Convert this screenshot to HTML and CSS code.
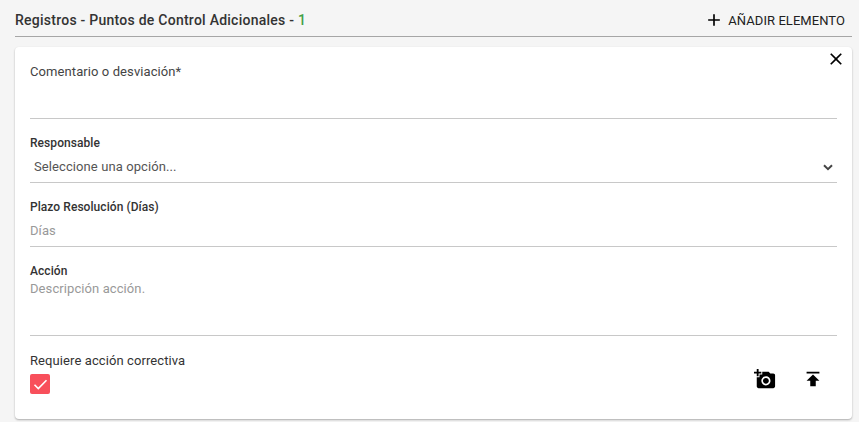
FILE: index.html
```html
<!DOCTYPE html>
<html lang="es">

<head>
  <meta charset="UTF-8" />
  <meta name="viewport" content="width=device-width, initial-scale=1.0" />
  <title>Registros</title>
  <link rel="stylesheet" href="styles.css">
</head>

<body>
  <div class="header">
    <h2 class="title">Registros - Puntos de Control Adicionales - <span class="count">1</span></h2>
    <button class="add-button" type="button">
      <svg class="add-icon" viewBox="0 0 24 24"><path d="M19 13h-6v6h-2v-6H5v-2h6V5h2v6h6v2z" /></svg>
      <span class="add-text">AÑADIR ELEMENTO</span>
    </button>
  </div>

  <form class="card">
    <button class="close-button" type="button" aria-label="Cerrar">
      <svg class="close-icon" viewBox="0 0 24 24"><path d="M19 6.41L17.59 5 12 10.59 6.41 5 5 6.41 10.59 12 5 17.59 6.41 19 12 13.41 17.59 19 19 17.59 13.41 12 19 6.41z" /></svg>
    </button>

    <div class="field field-comment">
      <label class="label-light" for="comentario">Comentario o desviación*</label>
      <textarea class="control" id="comentario"></textarea>
    </div>

    <div class="field field-select">
      <label class="label" for="responsable">Responsable</label>
      <div class="select" id="responsable" tabindex="0">
        <span>Seleccione una opción...</span>
        <svg class="arrow" viewBox="0 0 10 7"><path d="M1 1.2l4 3.9 4-3.9" /></svg>
      </div>
    </div>

    <div class="field field-days">
      <label class="label" for="plazo">Plazo Resolución (Días)</label>
      <input class="control" id="plazo" type="text" placeholder="Días" />
    </div>

    <div class="field field-action">
      <label class="label" for="accion">Acción</label>
      <textarea class="control" id="accion" placeholder="Descripción acción."></textarea>
    </div>

    <div class="footer">
      <div class="corrective">
        <label class="label-check" for="correctiva">Requiere acción correctiva</label>
        <div class="checkbox" id="correctiva" role="checkbox" aria-checked="true">
          <svg class="check-icon" viewBox="0 0 20 20"><path d="M4.5 10.8l3.8 3.8 8.2-8.3" /></svg>
        </div>
      </div>
      <div class="actions">
        <svg class="action-icon" viewBox="0 0 24 24"><path d="M3 4V1h2v3h3v2H5v3H3V6H0V4h3zm3 6V7h3V4h7l1.83 2H21c1.1 0 2 .9 2 2v12c0 1.1-.9 2-2 2H5c-1.1 0-2-.9-2-2V10h3zm7 9c2.76 0 5-2.24 5-5s-2.24-5-5-5-5 2.24-5 5 2.24 5 5 5zm-3.2-5c0 1.77 1.43 3.2 3.2 3.2s3.2-1.43 3.2-3.2-1.43-3.2-3.2-3.2-3.2 1.43-3.2 3.2z" /></svg>
        <svg class="action-icon" viewBox="0 0 24 24"><path d="M5 4v2h14V4H5zm0 10h4v6h6v-6h4l-7-7-7 7z" /></svg>
      </div>
    </div>
  </form>
</body>

</html>
```
FILE: styles.css
```css
* {
  box-sizing: border-box;
}

body {
  margin: 0;
  padding: 0 7px 0 15px;
  height: 422px;
  overflow: hidden;
  background-color: #f5f5f5;
  font-family: Roboto, Arial, sans-serif;
  font-size: 13px;
  letter-spacing: 0.09px;
  color: #333;
}

button {
  border: none;
  background: none;
  padding: 0;
  font-family: inherit;
  cursor: pointer;
}

/* Header */
.header {
  display: flex;
  align-items: center;
  justify-content: space-between;
  height: 37px;
  padding: 3px 7px 0 0;
  border-bottom: 1px solid #a6a6a6;
}

.title {
  margin: 0;
  font-size: 14px;
  font-weight: 500;
  letter-spacing: 0.25px;
}

.count {
  color: #43a047;
}

.add-button {
  display: flex;
  align-items: center;
  gap: 4px;
  font-size: 13px;
  letter-spacing: 0.06px;
  color: #212121;
}

.add-text {
  padding-top: 2px;
}

.add-icon,
.close-icon {
  display: block;
  width: 20px;
  height: 20px;
  fill: #000;
}

/* Card */
.card {
  position: relative;
  height: 372px;
  margin-top: 10px;
  padding: 15px 15px 0;
  border-radius: 4px;
  background-color: #fff;
  box-shadow: 0 1px 2px rgba(0, 0, 0, 0.3);
}

.close-button {
  position: absolute;
  top: 2px;
  right: 6px;
}

/* Fields */
.field {
  display: flex;
  flex-direction: column;
  border-bottom: 1px solid #c8c8c8;
}

.label {
  font-size: 12px;
  font-weight: 500;
  line-height: 16px;
  letter-spacing: 0.06px;
}

.label-light {
  line-height: 20px;
  color: #444;
}

.label-check {
  line-height: 18px;
}

.control {
  flex: 1;
  min-height: 0;
  width: 100%;
  padding: 0;
  border: none;
  outline: none;
  resize: none;
  background: none;
  font: inherit;
  letter-spacing: inherit;
  color: #555;
}

.control::placeholder {
  color: #999;
}

.field-comment {
  height: 57px;
}

.field-select,
.field-days {
  height: 48px;
  margin-top: 16px;
}

.field-action {
  height: 73px;
  margin-top: 16px;
}

.field-action .control {
  padding-top: 2px;
}

.select {
  display: flex;
  flex: 1;
  align-items: center;
  justify-content: space-between;
  padding: 0 4px;
  color: #555;
}

.arrow {
  width: 10px;
  height: 7px;
  margin-top: 2px;
  fill: none;
  stroke: #444;
  stroke-width: 2;
}

/* Footer */
.footer {
  display: flex;
  justify-content: space-between;
  padding: 16px 13px 0 0;
}

.checkbox {
  width: 20px;
  height: 20px;
  margin-top: 4px;
  border-radius: 2px;
  background-color: #f84f5b;
}

.check-icon {
  display: block;
  fill: none;
  stroke: #fff;
  stroke-width: 1.6;
}

.actions {
  display: flex;
  gap: 26px;
  padding-top: 16px;
}

.action-icon {
  width: 22px;
  height: 22px;
  fill: #000;
}
```
